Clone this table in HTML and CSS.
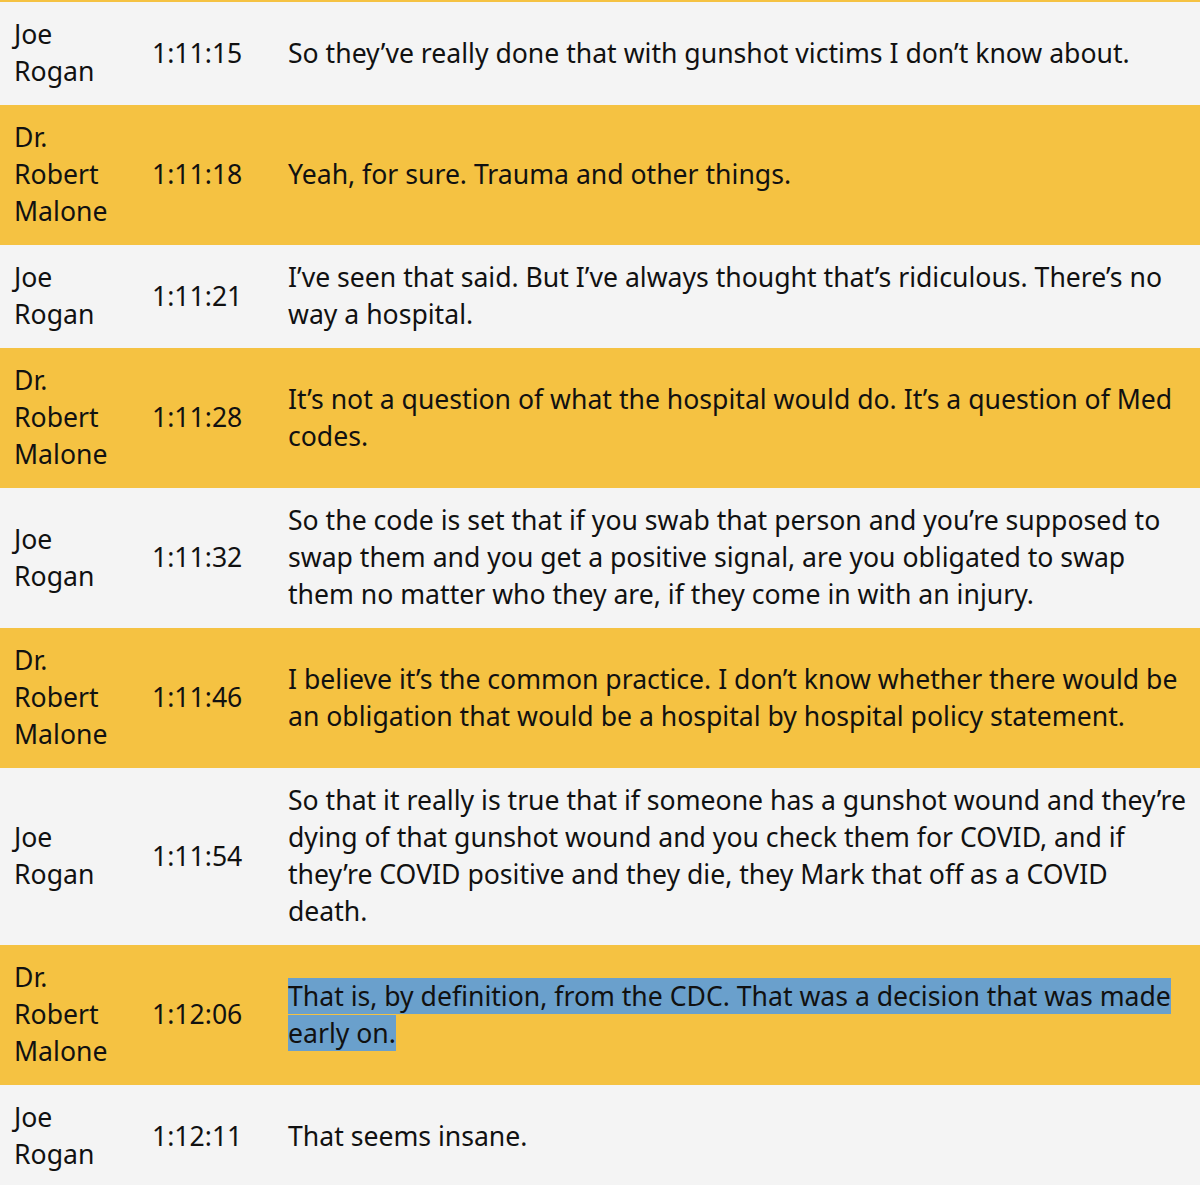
FILE: index.html
```html
<!DOCTYPE html>
<html>
<head>
<meta charset="utf-8">
<link rel="stylesheet" href="styles.css">
</head>
<body>
<div class="top-strip"></div>
<table class="transcript">
  <tr class="row odd"><td class="name">Joe Rogan</td><td class="time">1:11:15</td><td class="text">So they’ve really done that with gunshot victims I don’t know about.</td></tr>
  <tr class="row even"><td class="name">Dr. Robert Malone</td><td class="time">1:11:18</td><td class="text">Yeah, for sure. Trauma and other things.</td></tr>
  <tr class="row odd"><td class="name">Joe Rogan</td><td class="time">1:11:21</td><td class="text">I’ve seen that said. But I’ve always thought that’s ridiculous. There’s no way a hospital.</td></tr>
  <tr class="row even"><td class="name">Dr. Robert Malone</td><td class="time">1:11:28</td><td class="text">It’s not a question of what the hospital would do. It’s a question of Med codes.</td></tr>
  <tr class="row odd"><td class="name">Joe Rogan</td><td class="time">1:11:32</td><td class="text">So the code is set that if you swab that person and you’re supposed to swap them and you get a positive signal, are you obligated to swap them no matter who they are, if they come in with an injury.</td></tr>
  <tr class="row even"><td class="name">Dr. Robert Malone</td><td class="time">1:11:46</td><td class="text">I believe it’s the common practice. I don’t know whether there would be an obligation that would be a hospital by hospital policy statement.</td></tr>
  <tr class="row odd"><td class="name">Joe Rogan</td><td class="time">1:11:54</td><td class="text">So that it really is true that if someone has a gunshot wound and they’re dying of that gunshot wound and you check them for COVID, and if they’re COVID positive and they die, they Mark that off as a COVID death.</td></tr>
  <tr class="row even"><td class="name">Dr. Robert Malone</td><td class="time">1:12:06</td><td class="text"><span class="selected">That is, by definition, from the CDC. That was a decision that was made early on.</span></td></tr>
  <tr class="row odd"><td class="name">Joe Rogan</td><td class="time">1:12:11</td><td class="text">That seems insane.</td></tr>
</table>
</body>
</html>
```

FILE: styles.css
```css
html, body {
  margin: 0;
  padding: 0;
  background: #f4f4f4;
}
body {
  font-family: "Noto Sans", "Open Sans", sans-serif;
  font-size: 26.6px;
  line-height: 37px;
  color: #111;
  width: 1200px;
  overflow: hidden;
}
.top-strip {
  height: 2px;
  background: #f5c242;
}
.transcript {
  width: 1200px;
  border-collapse: collapse;
  table-layout: fixed;
}
.transcript td {
  padding: 14px 14px 15px 14px;
  vertical-align: middle;
}
.name { width: 110px; }
.time { width: 108px; }
.text { padding-right: 12px; }
.odd { background: #f4f4f4; }
.even { background: #f5c242; }
.selected { background: #6aa0cc; }
```
